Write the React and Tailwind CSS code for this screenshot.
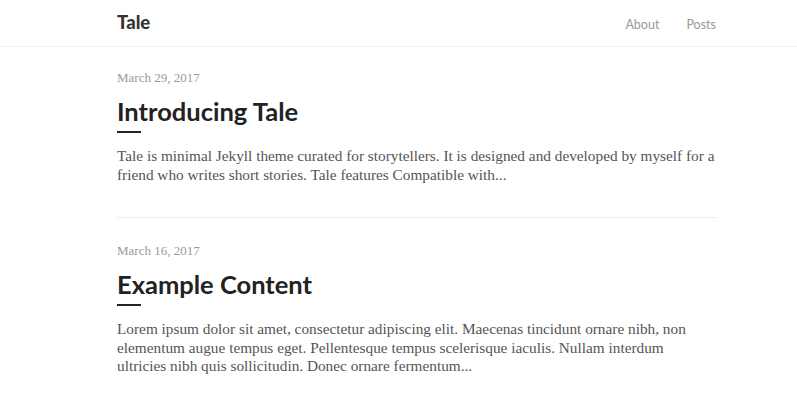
import React from 'react'

const posts = [
  {
    date: 'March 29, 2017',
    title: 'Introducing Tale',
    excerpt:
      'Tale is minimal Jekyll theme curated for storytellers. It is designed and developed by myself for a friend who writes short stories. Tale features Compatible with...',
  },
  {
    date: 'March 16, 2017',
    title: 'Example Content',
    excerpt:
      'Lorem ipsum dolor sit amet, consectetur adipiscing elit. Maecenas tincidunt ornare nibh, non elementum augue tempus eget. Pellentesque tempus scelerisque iaculis. Nullam interdum ultricies nibh quis sollicitudin. Donec ornare fermentum...',
  },
]

export default function App() {
  return (
    <div className="min-h-screen bg-white">
      {/* header */}
      <header className="h-[47px] border-b border-[#f0f0f0]">
        <div className="ml-[117px] flex h-full w-[599px] items-center justify-between">
          <a className="font-['Lato',sans-serif] text-[18.5px] font-black text-[#333]">Tale</a>
          <nav className="mt-[5px] flex gap-[27px] font-['Lato',sans-serif] text-[12.5px] text-[#999]">
            <a>About</a>
            <a>Posts</a>
          </nav>
        </div>
      </header>

      {/* posts */}
      <main className="ml-[117px] w-[599px] pt-[24px]">
        {posts.map((p, i) => (
          <article key={p.title} className={i > 0 ? 'border-t border-[#ececec] pt-[26px]' : ''}>
            <div className="font-['Liberation_Serif',serif] text-[13px] leading-[14px] text-[#9a9a9a]">
              {p.date}
            </div>
            <h2 className="mt-[11px] font-['Lato',sans-serif] text-[25.5px] font-bold leading-[30px] text-[#222]">
              {p.title}
            </h2>
            <div className="mt-[5px] h-[2px] w-[24px] bg-[#222]" />
            <p className="mt-[14px] pb-[33px] font-['Liberation_Serif',serif] text-[15.3px] leading-[18.5px] text-[#555]">
              {p.excerpt}
            </p>
          </article>
        ))}
      </main>
    </div>
  )
}
